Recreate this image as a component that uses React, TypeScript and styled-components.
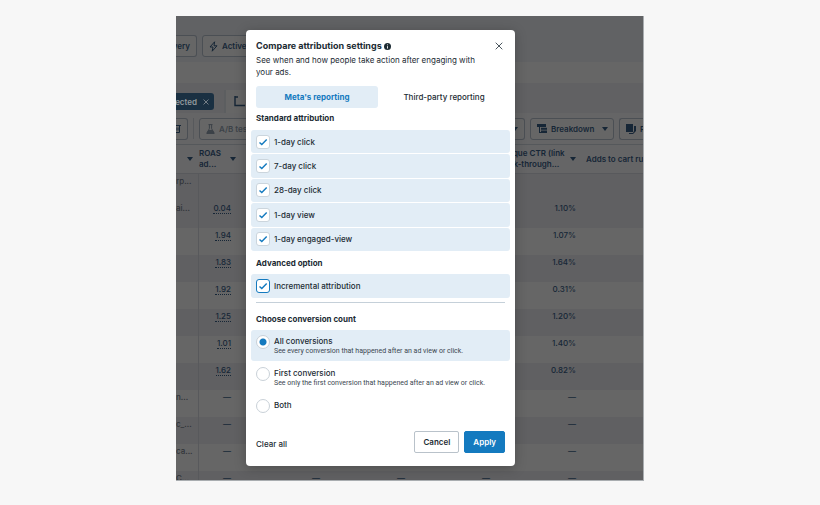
import React, { useState } from "react";
import styled, { createGlobalStyle } from "styled-components";

const GlobalStyle = createGlobalStyle`
  *, *::before, *::after { box-sizing: border-box; }
  body { margin: 0; background: #f7f7f7; }
  body, button, input { font-family: Inter, "Liberation Sans", sans-serif; }
  svg { flex: none; }
`;

const ink = "#1c2b33";
const blue = "#147abf";
const dimInk = "#162636";

const Page = styled.main`
  min-height: 100vh;
  padding: 16px 176px 24px;
  display: flex;
  color: ${ink};
`;

const Stage = styled.div`
  position: relative;
  flex: 1;
  min-width: 0;
  padding: 14px 129px 15px 70px;
  background: #616163;
`;

const Behind = styled.div`
  position: absolute;
  inset: 0;
  overflow: hidden;
  display: flex;
  flex-direction: column;
  border-right: 1px solid #a9adb0;
  border-bottom: 1px solid #a9adb0;
  color: ${dimInk};
  font-size: 8px;
  font-weight: 500;
  white-space: nowrap;
`;

const FilterBar = styled.div`
  flex: none;
  height: 46px;
  padding-top: 19px;
  display: flex;
  align-items: flex-start;
  gap: 5px;
  background: #616264;
`;

const SearchBar = styled.div`
  flex: none;
  height: 21px;
  background: #666666;
`;

const LevelBar = styled.div`
  flex: none;
  height: 30px;
  padding-top: 7px;
  display: flex;
  align-items: stretch;
  gap: 10px;
`;

const Chip = styled.button`
  width: 38px;
  height: 17px;
  margin-top: 3px;
  padding: 0 5px 0 0;
  border: 0;
  border-radius: 0 3px 3px 0;
  background: #1a3042;
  color: #949a9e;
  display: flex;
  align-items: center;
  justify-content: flex-end;
  gap: 6px;
  font-size: 8px;
  font-weight: 600;
  overflow: hidden;
  white-space: nowrap;
`;

const LevelTab = styled.button`
  width: 80px;
  padding: 0 8px;
  border: 0;
  border-left: 2px solid #5c5e60;
  background: #666666;
  color: ${dimInk};
  display: flex;
  align-items: center;
`;

const ToolBar = styled.div`
  flex: none;
  height: 31px;
  display: flex;
  align-items: center;
  gap: 5px;
  background: #656566;
`;

const Spacer = styled.span`
  flex: 1;
`;

const Rule = styled.span`
  width: 1px;
  height: 21px;
  background: #57595c;
`;

const DimButton = styled.button<{ $w: number; $cut?: "left" | "right"; $faint?: boolean }>`
  flex: none;
  width: ${(p) => p.$w}px;
  height: 22px;
  padding: ${(p) => (p.$cut === "left" ? "0 6px 0 0" : "0 6px")};
  border: 1px solid #4b4f54;
  border-left-width: ${(p) => (p.$cut === "left" ? 0 : 1)}px;
  border-right-width: ${(p) => (p.$cut === "right" ? 0 : 1)}px;
  border-radius: ${(p) => (p.$cut === "left" ? "0 3px 3px 0" : p.$cut === "right" ? "3px 0 0 3px" : "3px")};
  background: #666666;
  color: ${(p) => (p.$faint ? "#3c4248" : dimInk)};
  display: flex;
  align-items: center;
  justify-content: ${(p) => (p.$cut === "left" ? "flex-end" : "flex-start")};
  gap: 4px;
  font-size: 8px;
  font-weight: 600;
  white-space: nowrap;
  overflow: hidden;
`;

const Report = styled.table`
  width: 100%;
  table-layout: fixed;
  border-collapse: collapse;
  font-size: 8px;
  line-height: 11px;
  thead tr { height: 29px; background: #656566; border-top: 1px solid #55585b; border-bottom: 1px solid #58595c; }
  th { padding: 0 5px; overflow: hidden; font-weight: 600; text-align: left; }
  th:nth-child(2) { padding: 0 0 0 1px; }
  td { padding: 2px 5px 0; overflow: hidden; text-align: right; vertical-align: top; }
  tbody tr { height: 27px; }
`;

const Row = styled.tr<{ $shade: boolean }>`
  background: ${(p) => (p.$shade ? "#606062" : "#666666")};
  td:first-child { text-align: left; padding-left: 0; padding-right: 0; border-right: 1px solid #58595c; color: #303439; }
`;

const HeadCell = styled.span`
  display: flex;
  align-items: center;
  justify-content: space-between;
`;

const Metric = styled.span`
  border-bottom: 1px dotted ${dimInk};
`;

const Dialog = styled.section`
  position: relative;
  min-height: 100%;
  padding: 10px 5px 13px;
  border-radius: 4px;
  background: #fff;
  box-shadow: 0 2px 12px rgba(0, 0, 0, 0.25);
  display: flex;
  flex-direction: column;
`;

const DialogHead = styled.header`
  padding: 0 5px;
  display: flex;
  justify-content: space-between;
  align-items: flex-start;
`;

const Title = styled.h1`
  margin: 0;
  display: flex;
  align-items: center;
  gap: 2px;
  font-size: 9px;
  line-height: 12px;
  font-weight: 700;
`;

const IconButton = styled.button`
  padding: 2px;
  border: 0;
  background: none;
  color: #4a565e;
  display: flex;
`;

const Lead = styled.p`
  margin: 2px 5px 0;
  max-width: 225px;
  font-size: 8px;
  line-height: 12px;
`;

const Tabs = styled.div`
  margin: 8px 5px 0;
  display: grid;
  grid-template-columns: 1fr 1fr;
  gap: 5px;
`;

const Tab = styled.button<{ $on: boolean }>`
  height: 22px;
  padding: 0;
  border: 0;
  border-radius: 3px;
  background: ${(p) => (p.$on ? "#e2edf6" : "transparent")};
  color: ${(p) => (p.$on ? blue : ink)};
  font-size: 8px;
  font-weight: ${(p) => (p.$on ? 700 : 500)};
`;

const Heading = styled.h2<{ $top: number; $bottom: number }>`
  margin: ${(p) => p.$top}px 5px ${(p) => p.$bottom}px;
  font-size: 8px;
  line-height: 12px;
  font-weight: 700;
`;

const Options = styled.div<{ $height: number }>`
  min-height: ${(p) => p.$height}px;
  display: grid;
  grid-auto-rows: 1fr;
  gap: 1px;
`;

const Option = styled.label`
  padding: 0 5px;
  border-radius: 3px;
  background: #e2edf6;
  display: flex;
  align-items: center;
  gap: 4px;
  font-size: 8px;
  line-height: 12px;
  font-weight: 500;
`;

const CheckBox = styled.span<{ $focus?: boolean }>`
  width: 14px;
  height: 14px;
  border: 1px solid ${(p) => (p.$focus ? blue : "#cbd5dd")};
  border-radius: 3px;
  background: #fff;
  display: grid;
  input { grid-area: 1 / 1; margin: 0; appearance: none; width: 12px; height: 12px; }
  svg { grid-area: 1 / 1; pointer-events: none; visibility: hidden; }
  input:checked + svg { visibility: visible; }
`;

const Divider = styled.hr`
  width: calc(100% - 10px);
  margin: 4px 5px 0;
  border: 0;
  border-top: 1px solid #c5d0d9;
`;

const Choice = styled.label<{ $on: boolean }>`
  min-height: 31px;
  margin-bottom: 1px;
  padding: 5px 5px 0;
  border-radius: 3px;
  background: ${(p) => (p.$on ? "#e2edf6" : "transparent")};
  display: flex;
  align-items: flex-start;
  gap: 4px;
  font-size: 8px;
  line-height: 12px;
  font-weight: 500;
`;

const Radio = styled.input`
  appearance: none;
  flex: none;
  width: 14px;
  height: 14px;
  margin: 0;
  border: 1px solid #c9d1d8;
  border-radius: 50%;
  background: #fff;
  &:checked { background: radial-gradient(circle, ${blue} 3px, #fff 4px); }
`;

const Hint = styled.small`
  display: block;
  color: #3a4750;
  font-family: Roboto, "Liberation Sans", sans-serif;
  font-size: 7px;
  line-height: 9px;
  font-weight: 400;
`;

const Footer = styled.footer`
  margin-top: auto;
  padding: 0 5px;
  display: flex;
  align-items: center;
  gap: 5px;
`;

const TextButton = styled.button`
  margin-right: auto;
  padding: 4px 0 0;
  border: 0;
  background: none;
  color: ${ink};
  font-size: 8px;
  font-weight: 500;
`;

const Action = styled.button<{ $primary?: boolean }>`
  height: 22px;
  padding: 0 8px;
  border: 1px solid ${(p) => (p.$primary ? blue : "#b9c2ca")};
  border-radius: 2px;
  background: ${(p) => (p.$primary ? blue : "#fff")};
  color: ${(p) => (p.$primary ? "#fff" : ink)};
  font-size: 8px;
  font-weight: 600;
`;

const Caret = () => (
  <svg width="6" height="4" viewBox="0 0 6 4" aria-hidden="true">
    <path d="M0 0h6L3 4z" fill="currentColor" />
  </svg>
);

const Cross = ({ size }: { size: number }) => (
  <svg width={size} height={size} viewBox="0 0 8 8" aria-hidden="true">
    <path d="M.7.7l6.6 6.6M7.3.7L.7 7.3" stroke="currentColor" strokeWidth="1" fill="none" />
  </svg>
);

const InfoIcon = () => (
  <svg width="7" height="7" viewBox="0 0 8 8" aria-hidden="true">
    <circle cx="4" cy="4" r="4" fill={ink} />
    <path d="M4 1.6v1M4 3.6v2.8" stroke="#fff" strokeWidth="1" />
  </svg>
);

const Bolt = () => (
  <svg width="9" height="11" viewBox="0 0 9 11" fill="none" stroke="currentColor" aria-hidden="true">
    <path d="M5.6.8L1 6h3L3.2 10.2 8 4.8H5z" strokeLinejoin="round" />
  </svg>
);

const Corner = () => (
  <svg width="11" height="11" viewBox="0 0 11 11" fill="none" stroke="currentColor" strokeWidth="1.4" aria-hidden="true">
    <path d="M1 0v9.5h10M1 1h3" />
  </svg>
);

const Flask = () => (
  <svg width="9" height="10" viewBox="0 0 9 10" fill="none" stroke="currentColor" aria-hidden="true">
    <path d="M2.5.6h4M3.4.6v4L.8 9.4h7.4L5.6 4.6v-4" />
    <path d="M2.4 6.5h4.2L8 9.2H1z" fill="currentColor" />
  </svg>
);

const BreakdownIcon = () => (
  <svg width="10" height="9" viewBox="0 0 10 9" fill="currentColor" aria-hidden="true">
    <path d="M0 0h9v3H0zM4 3.8h6v2H4zM4 6.6h6V9H4zM2 3h1v5h2v1H2z" />
  </svg>
);

const ReportIcon = () => (
  <svg width="10" height="10" viewBox="0 0 10 10" aria-hidden="true">
    <path d="M0 0h7v8H0zM8 2h2v5L7 10H3V9h4l1-2z" fill="currentColor" />
  </svg>
);

const TrashIcon = () => (
  <svg width="8" height="9" viewBox="0 0 8 9" fill="none" stroke="currentColor" aria-hidden="true">
    <path d="M0 1.5h8M1.5 1.5V8.5h5v-7M3 3.5v3M5 3.5v3" />
  </svg>
);

const Tick = () => (
  <svg width="12" height="12" viewBox="0 0 12 12" fill="none" aria-hidden="true">
    <path d="M2.5 6.4L4.8 8.6 9.7 3.4" stroke={blue} strokeWidth="1.4" />
  </svg>
);

const rows = [
  ["rp...", "", ""],
  ["ai...", "0.04", "1.10%"],
  ["", "1.94", "1.07%"],
  ["", "1.83", "1.64%"],
  ["", "1.92", "0.31%"],
  ["", "1.25", "1.20%"],
  ["", "1.01", "1.40%"],
  ["", "1.62", "0.82%"],
  ["n...", "—", "—"],
  ["c_...", "—", "—"],
  ["ca...", "—", "—"],
  ["C...", "—", "—"],
];

const windows = ["1-day click", "7-day click", "28-day click", "1-day view", "1-day engaged-view"];

const counts = [
  { id: "all", label: "All conversions", hint: "See every conversion that happened after an ad view or click." },
  { id: "first", label: "First conversion", hint: "See only the first conversion that happened after an ad view or click." },
  { id: "both", label: "Both", hint: "" },
];

const AdsTable = () => (
  <Report>
    <colgroup>
      <col width="22" />
      <col width="38" />
      <col width="89" />
      <col width="85" />
      <col width="85" />
      <col width="86" />
      <col />
    </colgroup>
    <thead>
      <tr>
        <th><HeadCell><span /><Caret /></HeadCell></th>
        <th><HeadCell><span>ROAS<br />ad...</span><Caret /></HeadCell></th>
        <th />
        <th />
        <th />
        <th><HeadCell><span>Unique CTR (link<br />click-through...</span><Caret /></HeadCell></th>
        <th>Adds to cart ru</th>
      </tr>
    </thead>
    <tbody>
      {rows.map(([name, roas, ctr], i) => {
        const filler = roas === "—" ? "—" : "";
        return (
          <Row key={i} $shade={i === 0 || i % 2 === 1}>
            <td>{name}</td>
            <td>{filler || !roas ? roas : <Metric>{roas}</Metric>}</td>
            <td>{filler}</td>
            <td>{filler}</td>
            <td>{filler}</td>
            <td>{ctr}</td>
            <td />
          </Row>
        );
      })}
    </tbody>
  </Report>
);

export default function App() {
  const [tab, setTab] = useState(0);
  const [count, setCount] = useState("all");
  return (
    <>
      <GlobalStyle />
      <Page>
        <Stage>
          <Behind>
            <FilterBar>
              <DimButton $w={21} $cut="left">Delivery</DimButton>
              <DimButton $w={80}><Bolt />Active</DimButton>
            </FilterBar>
            <SearchBar />
            <LevelBar>
              <Chip>selected<Cross size={6} /></Chip>
              <LevelTab aria-label="Ad sets"><Corner /></LevelTab>
            </LevelBar>
            <ToolBar>
              <DimButton $w={12} $cut="left" aria-label="Delete"><TrashIcon /></DimButton>
              <Rule />
              <DimButton $w={70} $faint><Flask />A/B test</DimButton>
              <Spacer />
              <DimButton $w={40} $cut="left" aria-label="Columns"><Caret /></DimButton>
              <DimButton $w={84}><BreakdownIcon />Breakdown<Spacer /><Caret /></DimButton>
              <DimButton $w={24} $cut="right"><ReportIcon />Reports</DimButton>
            </ToolBar>
            <AdsTable />
          </Behind>

          <Dialog role="dialog" aria-labelledby="dialog-title">
            <DialogHead>
              <Title id="dialog-title">Compare attribution settings <InfoIcon /></Title>
              <IconButton aria-label="Close"><Cross size={8} /></IconButton>
            </DialogHead>
            <Lead>See when and how people take action after engaging with your ads.</Lead>
            <Tabs role="tablist">
              {["Meta's reporting", "Third-party reporting"].map((name, i) => (
                <Tab key={name} role="tab" aria-selected={tab === i} $on={tab === i} onClick={() => setTab(i)}>
                  {name}
                </Tab>
              ))}
            </Tabs>

            <Heading $top={4} $bottom={6}>Standard attribution</Heading>
            <Options $height={121}>
              {windows.map((name) => (
                <Option key={name}>
                  <CheckBox><input type="checkbox" defaultChecked /><Tick /></CheckBox>
                  {name}
                </Option>
              ))}
            </Options>

            <Heading $top={6} $bottom={5}>Advanced option</Heading>
            <Options $height={24}>
              <Option>
                <CheckBox $focus><input type="checkbox" defaultChecked /><Tick /></CheckBox>
                Incremental attribution
              </Option>
            </Options>
            <Divider />

            <Heading $top={10} $bottom={5}>Choose conversion count</Heading>
            {counts.map((c) => (
              <Choice key={c.id} $on={count === c.id}>
                <Radio type="radio" name="count" checked={count === c.id} onChange={() => setCount(c.id)} />
                <span>
                  {c.label}
                  {c.hint && <Hint>{c.hint}</Hint>}
                </span>
              </Choice>
            ))}

            <Footer>
              <TextButton>Clear all</TextButton>
              <Action>Cancel</Action>
              <Action $primary>Apply</Action>
            </Footer>
          </Dialog>
        </Stage>
      </Page>
    </>
  );
}
